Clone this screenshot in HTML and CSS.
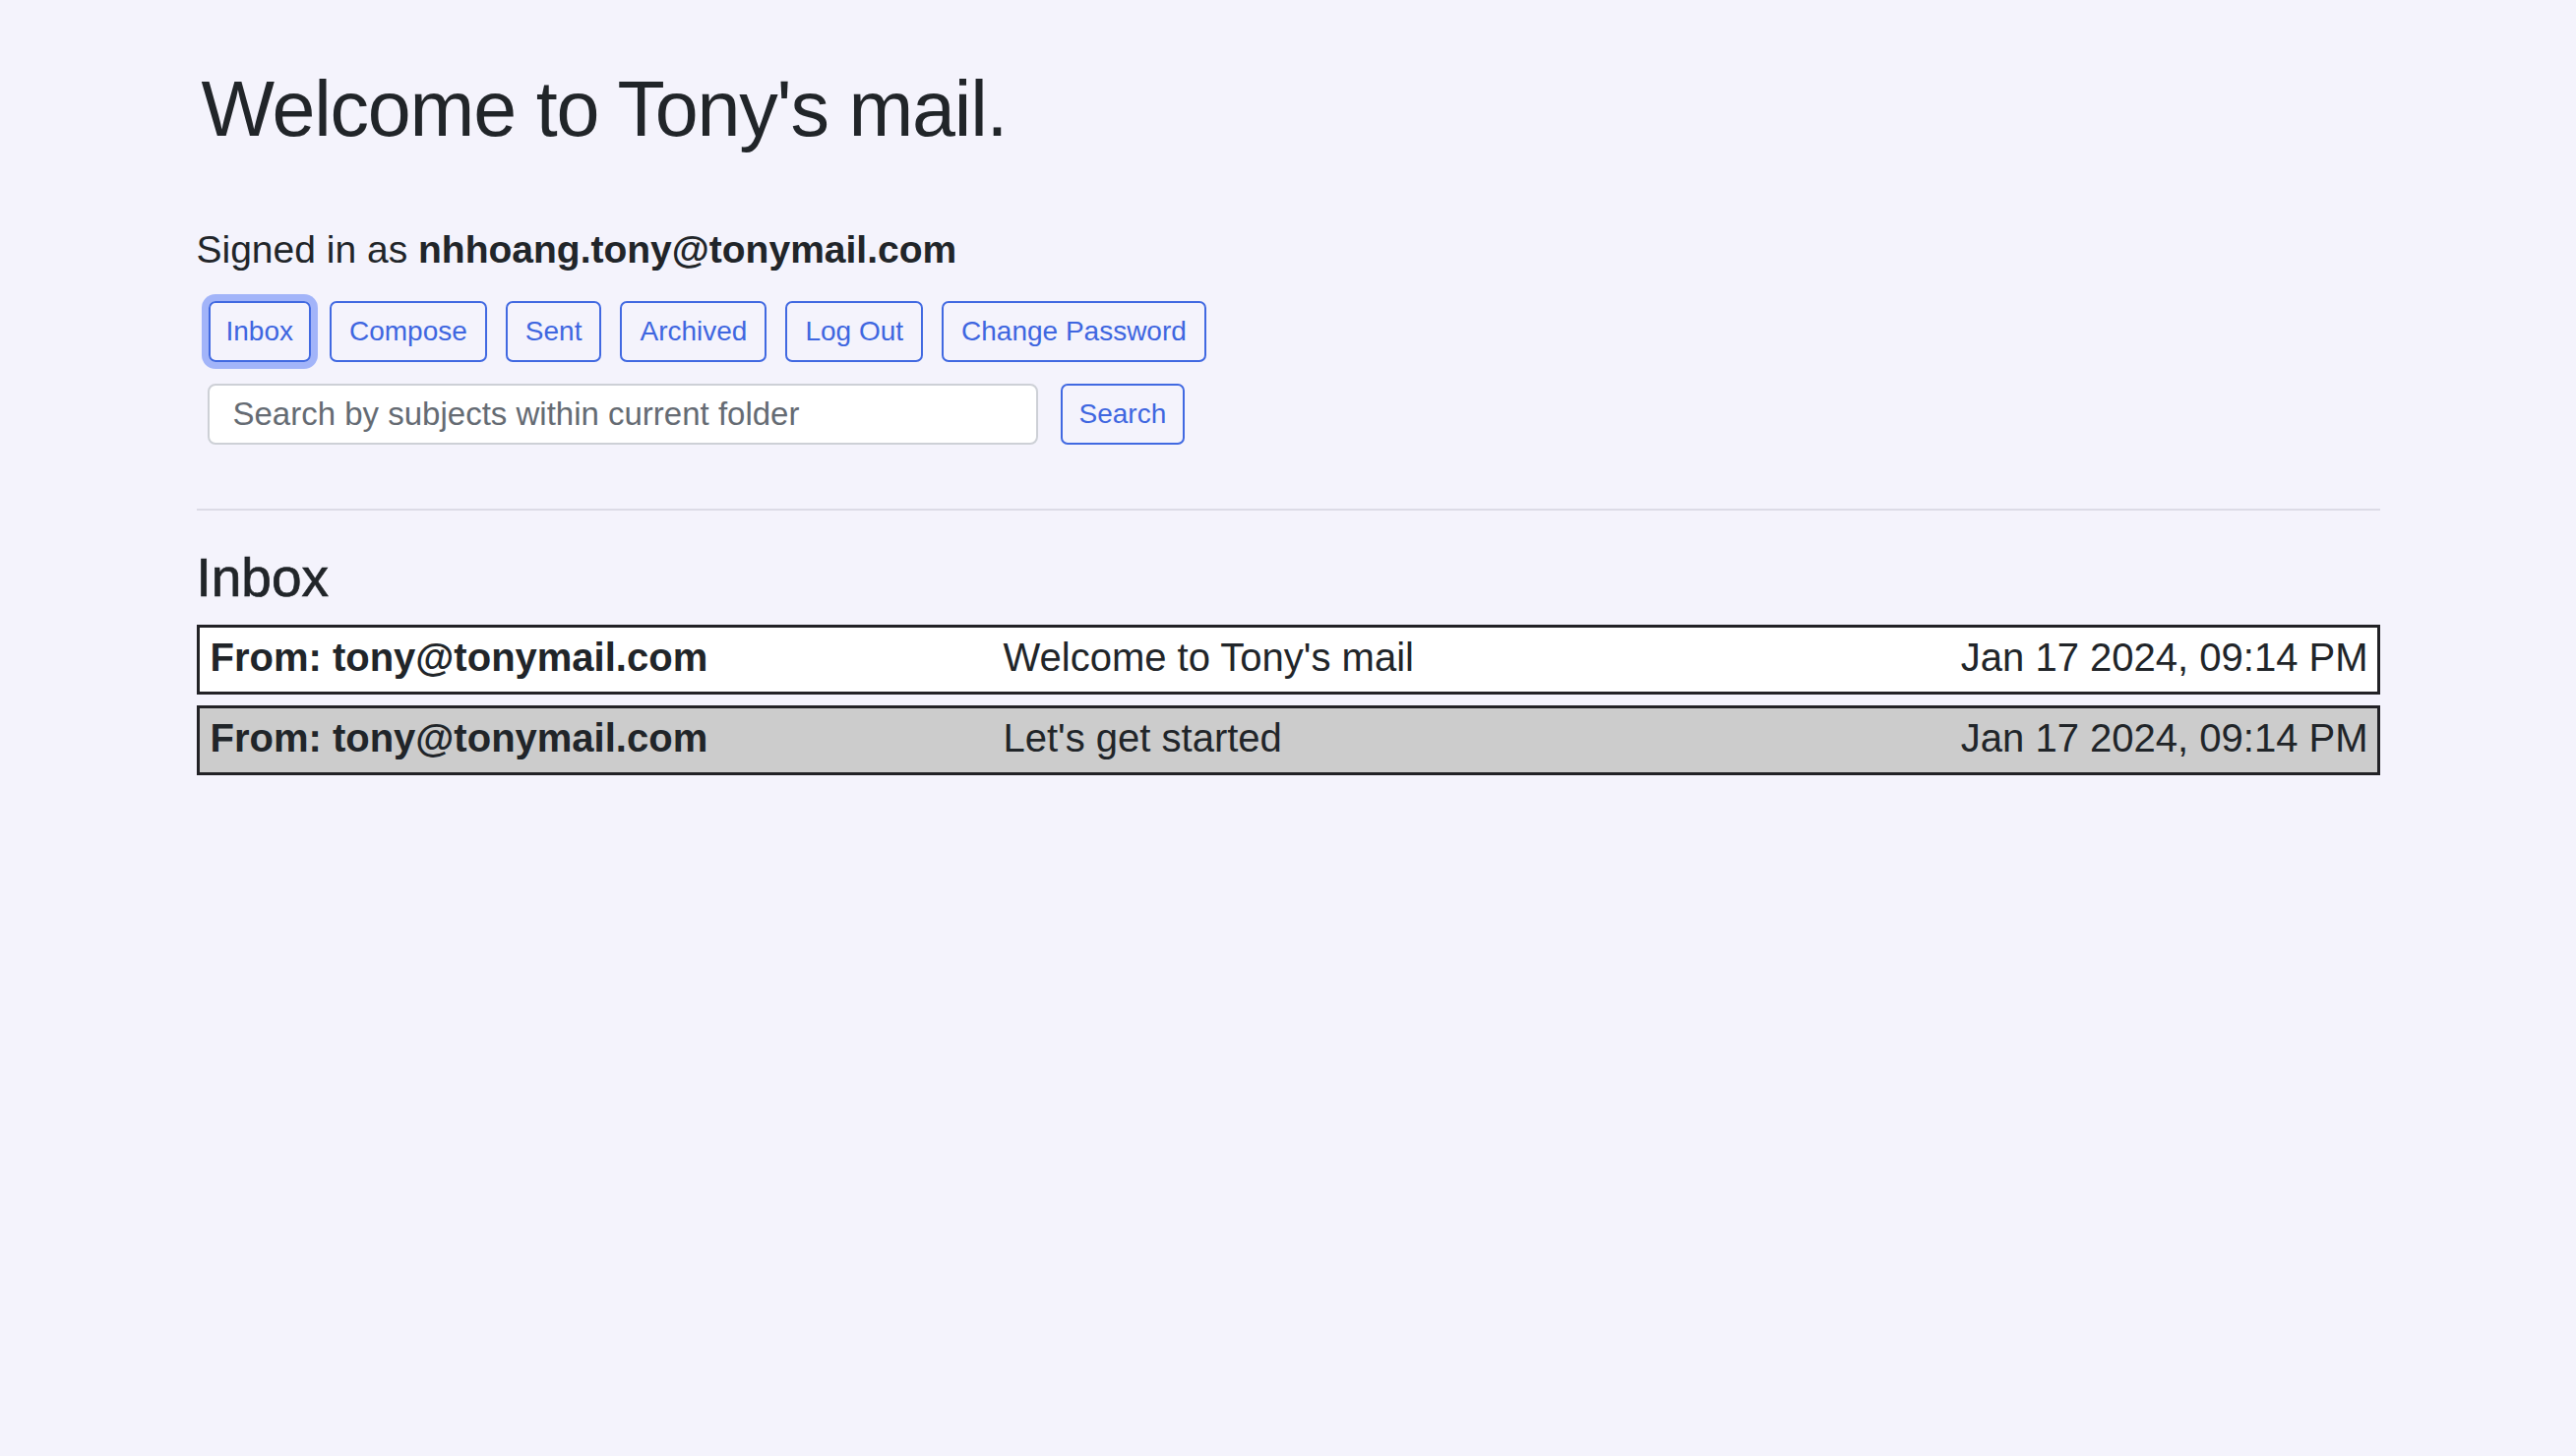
FILE: index.html
```html
<!DOCTYPE html>
<html lang="en">
<head>
<meta charset="utf-8">
<title>Tony's mail</title>
<link rel="stylesheet" href="styles.css">
</head>
<body>
<div class="page">
  <h1 class="title">Welcome to Tony's mail.</h1>
  <p class="signed">Signed in as <b>nhhoang.tony@tonymail.com</b></p>
  <div class="nav">
    <button class="btn btn-focus">Inbox</button>
    <button class="btn">Compose</button>
    <button class="btn">Sent</button>
    <button class="btn">Archived</button>
    <button class="btn">Log Out</button>
    <button class="btn">Change Password</button>
  </div>
  <form class="search">
    <input class="search-input" type="text" placeholder="Search by subjects within current folder">
    <button class="btn" type="button">Search</button>
  </form>
  <hr class="divider">
  <h3 class="folder">Inbox</h3>
  <div class="list">
    <div class="mail">
      <span class="from">From: tony@tonymail.com</span>
      <span class="subject">Welcome to Tony's mail</span>
      <span class="date">Jan 17 2024, 09:14 PM</span>
    </div>
    <div class="mail mail-read">
      <span class="from">From: tony@tonymail.com</span>
      <span class="subject">Let's get started</span>
      <span class="date">Jan 17 2024, 09:14 PM</span>
    </div>
  </div>
</div>
</body>
</html>
```

FILE: styles.css
```css
html, body {
  margin: 0;
  padding: 0;
  background: #f4f3fc;
}
body {
  font-family: "Liberation Sans", Arial, Helvetica, sans-serif;
  color: #212529;
}
.page {
  width: 2219px;
  margin: 0 auto;
  padding-top: 64px;
}
.title {
  margin: 0 0 72px 5px;
  font-size: 79px;
  line-height: 1.2;
  font-weight: normal;
  letter-spacing: -1.2px;
}
.signed {
  margin: 0;
  font-size: 39px;
  line-height: 1.2;
}
.signed b {
  font-weight: bold;
}
.nav {
  display: flex;
  gap: 19px;
  margin-top: 28px;
  padding-left: 12px;
}
.btn {
  font-family: "Liberation Sans", Arial, Helvetica, sans-serif;
  font-size: 28px;
  line-height: 42px;
  padding: 8px 18px;
  border: 2px solid #4169e1;
  border-radius: 7px;
  background: transparent;
  color: #3e66e0;
  margin: 0;
  cursor: pointer;
}
.btn-focus {
  padding: 8px 16px;
  box-shadow: 0 0 0 7px #a2b4f9;
}
.search {
  display: flex;
  gap: 23px;
  margin: 22px 0 0;
  padding-left: 11px;
}
.search .btn {
  padding: 8px 17px;
}
.search-input {
  box-sizing: border-box;
  width: 844px;
  height: 62px;
  padding: 0 24px;
  border: 2px solid #cdd0d6;
  border-radius: 8px;
  background: #fff;
  font-family: "Liberation Sans", Arial, Helvetica, sans-serif;
  font-size: 33px;
  color: #212529;
}
.search-input::placeholder {
  color: #656b73;
  opacity: 1;
}
.divider {
  margin: 65px 0 0;
  border: 0;
  border-top: 2px solid #dcdbe6;
  height: 0;
}
.folder {
  margin: 35px 0 0;
  font-size: 55px;
  line-height: 1.2;
  font-weight: normal;
  -webkit-text-stroke: 0.7px #212529;
}
.list {
  display: flex;
  flex-direction: column;
  gap: 11px;
  margin-top: 15px;
}
.mail {
  display: grid;
  grid-template-columns: 806px 1fr auto;
  border: 3px solid #222226;
  background: #fff;
  padding: 0 9px 5px 11px;
  font-size: 40px;
  line-height: 60px;
}
.mail-read {
  background: #cccccc;
}
.from {
  font-weight: bold;
}
.date {
  text-align: right;
}
```
